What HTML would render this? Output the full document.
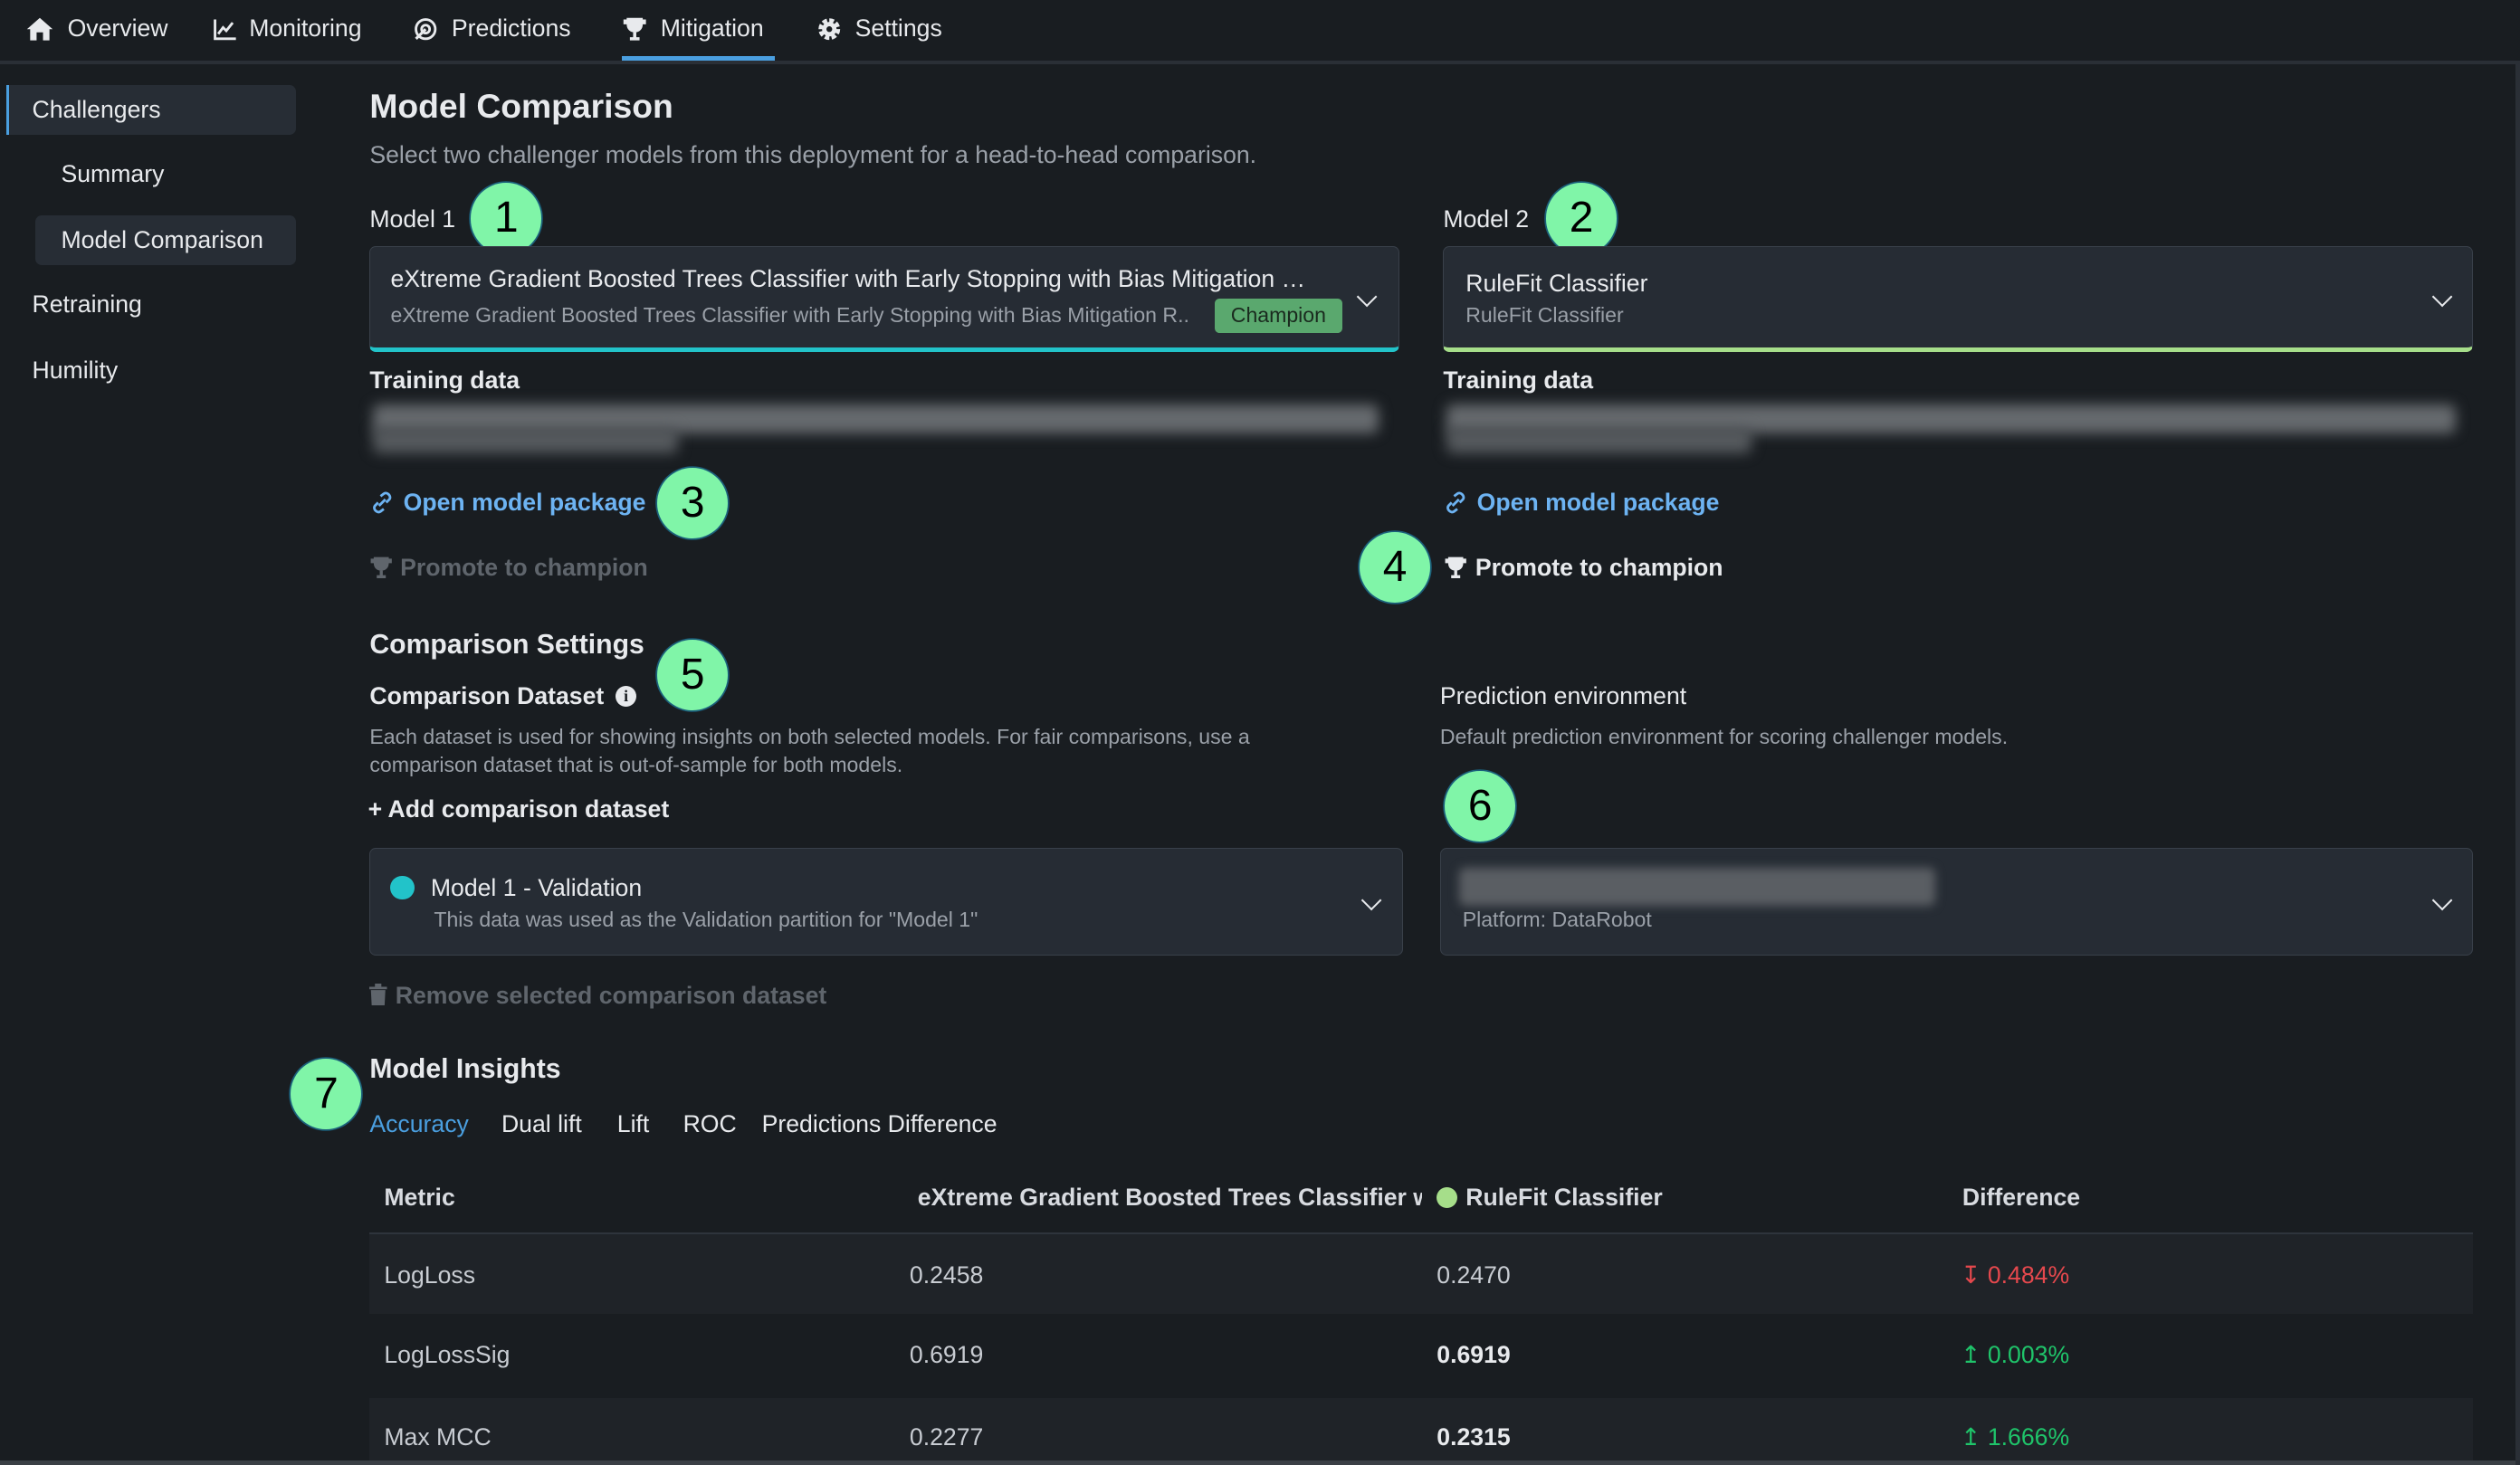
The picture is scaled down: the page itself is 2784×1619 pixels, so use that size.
<!DOCTYPE html>
<html><head><meta charset="utf-8"><style>
html,body{margin:0;padding:0;background:#191d21;overflow:hidden}
#w{position:relative;width:1568px;height:912px;zoom:1.7755;font-family:"Liberation Sans",sans-serif;color:#e8eaed;background:#191d21;overflow:hidden}
.a{position:absolute;white-space:nowrap;line-height:1}
.b{font-weight:bold}
.g{color:#9aa0a8}
.dg{color:#5f656c}
.badge{position:absolute;width:44px;height:44px;border-radius:50%;background:#80f5a8;color:#000;font-size:27px;line-height:44px;text-align:center;box-shadow:0 0 0 1px #1b5f7a}
.sel{position:absolute;background:#262c34;border:1px solid #39404a;border-radius:4px;box-sizing:border-box}
.chev{position:absolute;width:8px;height:8px;border-right:1.6px solid #e8eaed;border-bottom:1.6px solid #e8eaed;transform:rotate(45deg)}
.blur{position:absolute;background:#666a6e;filter:blur(4px);border-radius:4px}
</style></head><body><div id="w">
<!-- nav -->
<div style="position:absolute;left:0;top:38px;width:1568px;height:2px;background:#2a2f36"></div>
<div style="position:absolute;left:387px;top:35px;width:95px;height:3px;background:#4a9fe0"></div>
<svg class="a" style="left:16px;top:10px" width="18" height="16" viewBox="0 0 18 16"><path d="M9 1 L1 8 H3 V15 H7 V10 H11 V15 H15 V8 H17 Z" fill="#e8eaed"/></svg>
<div class="a" style="left:42px;top:10px;font-size:15px">Overview</div>
<svg class="a" style="left:132px;top:10px" width="16" height="16" viewBox="0 0 16 16"><path d="M2 2 V14 H15 M4 11 L7 7 L9 9 L13 4" stroke="#e8eaed" stroke-width="1.6" fill="none"/></svg>
<div class="a" style="left:155px;top:10px;font-size:15px">Monitoring</div>
<svg class="a" style="left:257px;top:10px" width="16" height="16" viewBox="0 0 16 16"><circle cx="8" cy="8" r="6" stroke="#e8eaed" stroke-width="1.6" fill="none"/><circle cx="8" cy="8" r="2.5" stroke="#e8eaed" stroke-width="1.6" fill="none"/><path d="M2 14 L8 8" stroke="#e8eaed" stroke-width="1.8"/></svg>
<div class="a" style="left:281px;top:10px;font-size:15px">Predictions</div>
<svg class="a" style="left:387px;top:10px" width="16" height="16" viewBox="0 0 16 16"><path d="M3 1 H13 V5 C13 8 11 10 8 10 C5 10 3 8 3 5 Z M1 2 H3 V5 H1 Z M13 2 H15 V5 H13 Z M7 10 H9 V13 H11 V15 H5 V13 H7 Z" fill="#e8eaed"/></svg>
<div class="a" style="left:411px;top:10px;font-size:15px">Mitigation</div>
<svg class="a" style="left:508px;top:10px" width="16" height="16" viewBox="0 0 16 16"><circle cx="8" cy="8" r="5" fill="none" stroke="#e8eaed" stroke-width="3.5" stroke-dasharray="2.6 1.3"/><circle cx="8" cy="8" r="4.5" fill="#e8eaed"/><circle cx="8" cy="8" r="1.8" fill="#191d21"/></svg>
<div class="a" style="left:532px;top:10px;font-size:15px">Settings</div>
<!-- sidebar -->
<div style="position:absolute;left:4px;top:53px;width:180px;height:31px;background:#272d35;border-radius:0 4px 4px 0;border-left:2px solid #4a9fe0;box-sizing:border-box"></div>
<div class="a" style="left:20px;top:61px;font-size:15px">Challengers</div>
<div class="a" style="left:38px;top:101px;font-size:15px">Summary</div>
<div style="position:absolute;left:22px;top:134px;width:162px;height:31px;background:#272d35;border-radius:4px"></div>
<div class="a" style="left:38px;top:142px;font-size:15px">Model Comparison</div>
<div class="a" style="left:20px;top:182px;font-size:15px">Retraining</div>
<div class="a" style="left:20px;top:223px;font-size:15px">Humility</div>
<!-- main -->
<div class="a b" style="left:230px;top:56px;font-size:21px">Model Comparison</div>
<div class="a g" style="left:230px;top:89px;font-size:15px">Select two challenger models from this deployment for a head-to-head comparison.</div>
<div class="a" style="left:230px;top:129px;font-size:15px">Model 1</div>
<div class="badge" style="left:293px;top:114px">1</div>
<div class="a" style="left:898px;top:129px;font-size:15px">Model 2</div>
<div class="badge" style="left:962px;top:114px">2</div>
<div class="sel" style="left:230px;top:153px;width:641px;height:66px;border-bottom:3px solid #22c3c9"></div>
<div class="a" style="left:243px;top:166px;font-size:15px">eXtreme Gradient Boosted Trees Classifier with Early Stopping with Bias Mitigation …</div>
<div class="a g" style="left:243px;top:190px;font-size:13px">eXtreme Gradient Boosted Trees Classifier with Early Stopping with Bias Mitigation R..</div>
<div style="position:absolute;left:756px;top:186px;width:79px;height:21px;background:#5aa86e;border-radius:3px;color:#1a2a1e;font-size:13px;line-height:21px;text-align:center;font-family:'Liberation Sans',sans-serif">Champion</div>
<div class="chev" style="left:846px;top:180px"></div>
<div class="sel" style="left:898px;top:153px;width:641px;height:66px;border-bottom:3px solid #a6de8a"></div>
<div class="a" style="left:912px;top:169px;font-size:15px">RuleFit Classifier</div>
<div class="a g" style="left:912px;top:190px;font-size:13px">RuleFit Classifier</div>
<div class="chev" style="left:1515px;top:180px"></div>
<div class="a b" style="left:230px;top:229px;font-size:15px">Training data</div>
<div class="a b" style="left:898px;top:229px;font-size:15px">Training data</div>
<div class="blur" style="left:232px;top:252px;width:626px;height:18px"></div>
<div class="blur" style="left:232px;top:266px;width:190px;height:16px;background:#55595d"></div>
<div class="blur" style="left:900px;top:252px;width:628px;height:18px"></div>
<div class="blur" style="left:900px;top:266px;width:190px;height:16px;background:#55595d"></div>
<svg class="a" style="left:230px;top:306px" width="16" height="14" viewBox="0 0 16 14"><path d="M6 9 L10 5 M7 3 L9 1.5 C11 0 14 3 12.5 5 L10.5 7 M9 11 L7 12.5 C5 14 2 11 3.5 9 L5.5 7" stroke="#6db3f2" stroke-width="1.6" fill="none"/></svg>
<div class="a b" style="left:251px;top:305px;font-size:15px;color:#6db3f2">Open model package</div>
<div class="badge" style="left:409px;top:291px">3</div>
<svg class="a" style="left:898px;top:306px" width="16" height="14" viewBox="0 0 16 14"><path d="M6 9 L10 5 M7 3 L9 1.5 C11 0 14 3 12.5 5 L10.5 7 M9 11 L7 12.5 C5 14 2 11 3.5 9 L5.5 7" stroke="#6db3f2" stroke-width="1.6" fill="none"/></svg>
<div class="a b" style="left:919px;top:305px;font-size:15px;color:#6db3f2">Open model package</div>
<svg class="a" style="left:229px;top:346px" width="16" height="15" viewBox="0 0 16 16"><path d="M3 1 H13 V5 C13 8 11 10 8 10 C5 10 3 8 3 5 Z M1 2 H3 V5 H1 Z M13 2 H15 V5 H13 Z M7 10 H9 V13 H11 V15 H5 V13 H7 Z" fill="#5f656c"/></svg>
<div class="a b dg" style="left:249px;top:346px;font-size:15px">Promote to champion</div>
<div class="badge" style="left:846px;top:331px">4</div>
<svg class="a" style="left:898px;top:346px" width="16" height="15" viewBox="0 0 16 16"><path d="M3 1 H13 V5 C13 8 11 10 8 10 C5 10 3 8 3 5 Z M1 2 H3 V5 H1 Z M13 2 H15 V5 H13 Z M7 10 H9 V13 H11 V15 H5 V13 H7 Z" fill="#e8eaed"/></svg>
<div class="a b" style="left:918px;top:346px;font-size:15px">Promote to champion</div>
<div class="a b" style="left:230px;top:393px;font-size:17px">Comparison Settings</div>
<div class="badge" style="left:409px;top:398px">5</div>
<div class="a b" style="left:230px;top:426px;font-size:15px">Comparison Dataset</div>
<div style="position:absolute;left:383px;top:427px;width:13px;height:13px;border-radius:50%;background:#e8eaed;color:#191d21;font-size:10px;line-height:13px;text-align:center;font-weight:bold;font-family:'Liberation Serif',serif">i</div>
<div class="a g" style="left:230px;top:452px;font-size:13px">Each dataset is used for showing insights on both selected models. For fair comparisons, use a</div>
<div class="a g" style="left:230px;top:470px;font-size:13px">comparison dataset that is out-of-sample for both models.</div>
<div class="a b" style="left:229px;top:496px;font-size:15px">+ Add comparison dataset</div>
<div class="a" style="left:896px;top:426px;font-size:15px">Prediction environment</div>
<div class="a g" style="left:896px;top:452px;font-size:13px">Default prediction environment for scoring challenger models.</div>
<div class="badge" style="left:899px;top:480px">6</div>
<div class="sel" style="left:230px;top:528px;width:643px;height:67px"></div>
<div style="position:absolute;left:243px;top:545px;width:15px;height:15px;border-radius:50%;background:#22c3c9"></div>
<div class="a" style="left:268px;top:545px;font-size:15px">Model 1 - Validation</div>
<div class="a g" style="left:270px;top:566px;font-size:13px">This data was used as the Validation partition for "Model 1"</div>
<div class="chev" style="left:849px;top:556px"></div>
<div class="sel" style="left:896px;top:528px;width:643px;height:67px"></div>
<div class="blur" style="left:908px;top:540px;width:296px;height:24px;background:#5a5e63;filter:blur(3px)"></div>
<div class="a g" style="left:910px;top:566px;font-size:13px">Platform: DataRobot</div>
<div class="chev" style="left:1515px;top:556px"></div>
<svg class="a" style="left:230px;top:612px" width="11" height="14" viewBox="0 0 11 14"><path d="M0 2 H11 V3.5 H0 Z M3.5 0 H7.5 V2 H3.5 Z M1 4 H10 L9.5 14 H1.5 Z" fill="#5f656c"/></svg>
<div class="a b dg" style="left:246px;top:612px;font-size:15px">Remove selected comparison dataset</div>
<div class="a b" style="left:230px;top:657px;font-size:17px">Model Insights</div>
<div class="badge" style="left:181px;top:659px">7</div>
<div class="a" style="left:230px;top:692px;font-size:15px;color:#4a9fe0">Accuracy</div>
<div class="a" style="left:312px;top:692px;font-size:15px">Dual lift</div>
<div class="a" style="left:384px;top:692px;font-size:15px">Lift</div>
<div class="a" style="left:425px;top:692px;font-size:15px">ROC</div>
<div class="a" style="left:474px;top:692px;font-size:15px">Predictions Difference</div>
<!-- table -->
<div class="a b" style="left:239px;top:738px;font-size:15px;color:#d8dbe0">Metric</div>
<div class="a b" style="left:571px;top:738px;font-size:15px;color:#d8dbe0;width:314px;overflow:hidden">eXtreme Gradient Boosted Trees Classifier with</div>
<div style="position:absolute;left:894px;top:739px;width:13px;height:13px;border-radius:50%;background:#a6de8a"></div>
<div class="a b" style="left:912px;top:738px;font-size:15px;color:#d8dbe0">RuleFit Classifier</div>
<div class="a b" style="left:1221px;top:738px;font-size:15px;color:#d8dbe0">Difference</div>
<div style="position:absolute;left:230px;top:767px;width:1309px;height:1px;background:#2e343c"></div>
<div style="position:absolute;left:230px;top:768px;width:1309px;height:50px;background:#1f2328"></div>
<div style="position:absolute;left:230px;top:870px;width:1309px;height:42px;background:#1f2328"></div>
<div style="position:absolute;left:0;top:909px;width:1568px;height:3px;background:#3a3f45"></div>
<div style="position:absolute;left:1565px;top:40px;width:3px;height:872px;background:#2a2f36"></div>
<div class="a" style="left:239px;top:786px;font-size:15px;color:#c8ccd2">LogLoss</div>
<div class="a" style="left:566px;top:786px;font-size:15px;color:#c8ccd2">0.2458</div>
<div class="a" style="left:894px;top:786px;font-size:15px;color:#c8ccd2">0.2470</div>
<div class="a" style="left:1220px;top:786px;font-size:15px;color:#e5484d">↧ 0.484%</div>
<div class="a" style="left:239px;top:836px;font-size:15px;color:#c8ccd2">LogLossSig</div>
<div class="a" style="left:566px;top:836px;font-size:15px;color:#c8ccd2">0.6919</div>
<div class="a b" style="left:894px;top:836px;font-size:15px">0.6919</div>
<div class="a" style="left:1220px;top:836px;font-size:15px;color:#1fc46a">↥ 0.003%</div>
<div class="a" style="left:239px;top:887px;font-size:15px;color:#c8ccd2">Max MCC</div>
<div class="a" style="left:566px;top:887px;font-size:15px;color:#c8ccd2">0.2277</div>
<div class="a b" style="left:894px;top:887px;font-size:15px">0.2315</div>
<div class="a" style="left:1220px;top:887px;font-size:15px;color:#1fc46a">↥ 1.666%</div>
</div></body></html>
